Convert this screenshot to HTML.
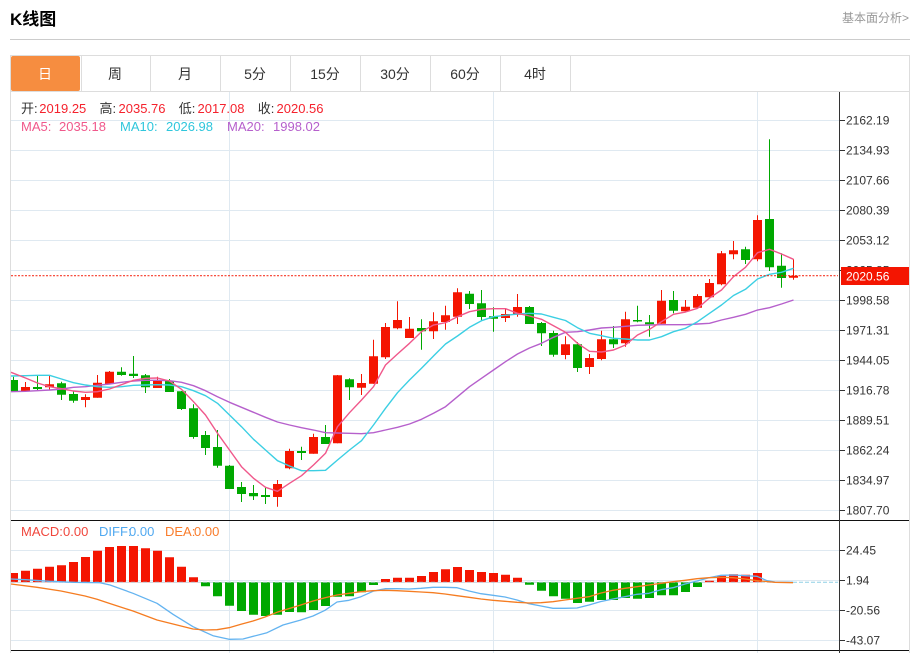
<!DOCTYPE html>
<html><head><meta charset="utf-8"><style>
html,body{margin:0;padding:0;background:#fff;width:918px;height:653px;overflow:hidden}
svg{display:block}
text{font-family:"Liberation Sans","Noto Sans CJK SC",sans-serif}
</style></head><body>
<svg width="918" height="653" viewBox="0 0 918 653" xmlns="http://www.w3.org/2000/svg">
<text x="10" y="25" font-size="17" font-weight="700" fill="#000">K线图</text>
<text x="842" y="22" font-size="12" fill="#999">基本面分析&gt;</text>
<path d="M10 39.5H910" stroke="#ccc" fill="none"/>
<!-- frame and tabs -->
<path d="M10 55.5H909.5V653M10.5 55V653M10 91.5H909.5" stroke="#ddd" fill="none"/>
<path d="M81.5 56V91M150.5 56V91M220.5 56V91M290.5 56V91M360.5 56V91M430.5 56V91M500.5 56V91M570.5 56V91" stroke="#ddd" fill="none"/>
<rect x="11" y="56" width="69" height="35" rx="2" fill="#f68d40"/>
<g font-size="14" text-anchor="middle" fill="#333">
<text x="45" y="79" fill="#fff">日</text>
<text x="115" y="79">周</text>
<text x="185" y="79">月</text>
<text x="255" y="79">5分</text>
<text x="325" y="79">15分</text>
<text x="395" y="79">30分</text>
<text x="465" y="79">60分</text>
<text x="535" y="79">4时</text>
</g>
<!-- grid -->
<path d="M11 120.5H839M11 150.5H839M11 180.5H839M11 210.5H839M11 240.5H839M11 270.5H839M11 300.5H839M11 330.5H839M11 360.5H839M11 390.5H839M11 420.5H839M11 450.5H839M11 480.5H839M11 510.5H839M11 550.5H839M11 580.5H839M11 610.5H839M11 640.5H839M229.5 92V653M493.5 92V653M757.5 92V653" stroke="#dfe9f1" fill="none"/>
<!-- candles red -->
<path stroke="#f41501" fill="none" d="M25.5 382V391M49.5 376V390M85.5 394.3V407.3M97.5 375V397.7M109.5 371V384M157.5 376.7V388M277.5 480V506.7M289.5 448.7V469.3M313.5 433.7V453.7M337.5 375V443.3M361.5 374V395M373.5 339.7V383.7M385.5 323V359M397.5 301.3V329.3M409.5 317V338M433.5 312.3V339M445.5 305.7V329.7M457.5 288.3V324M505.5 308.3V322M517.5 294V316.7M565.5 336.3V359.3M589.5 354V374M601.5 330.7V360.3M625.5 311.7V346.7M661.5 290V323.7M685.5 300V311.3M697.5 294.3V307.7M709.5 279V297.3M721.5 251V285.3M733.5 241V259.3M757.5 215.3V261.3M793.5 259.3V279.7"/>
<path fill="#f41501" d="M21 387h9v4h-9zM45 384.3h9v3h-9zM81 397h9v3h-9zM93 382.7h9v15h-9zM105 371.7h9v12.3h-9zM153 381h9v7h-9zM273 484h9v13h-9zM285 451h9v17.3h-9zM309 437h9v16.7h-9zM333 375.3h9v68h-9zM357 383h9v4.7h-9zM369 356.3h9v27.4h-9zM381 327h9v30.3h-9zM393 320h9v8.3h-9zM405 328.7h9v9.3h-9zM429 321.3h9v10h-9zM441 315.3h9v6.7h-9zM453 292.3h9v24.4h-9zM501 314h9v4h-9zM513 307h9v7.7h-9zM561 344.3h9v10.7h-9zM585 358h9v9h-9zM597 339.3h9v19.7h-9zM621 319.3h9v24h-9zM657 300.7h9v23h-9zM681 306.7h9v4.6h-9zM693 296h9v11.7h-9zM705 283h9v14.3h-9zM717 253.3h9v31h-9zM729 250.3h9v4h-9zM753 220h9v39.3h-9zM789 275.7h9v2h-9z"/>
<!-- candles green -->
<path stroke="#00a800" fill="none" d="M13.5 376.7V391.3M37.5 376V390M61.5 381.7V400M73.5 390.7V402.7M121.5 367.3V375.7M133.5 356V378M145.5 374V393M169.5 379V392M181.5 391V410M193.5 404.3V438.7M205.5 431V455M217.5 430V467.7M229.5 465V489M241.5 482V502M253.5 485V500M265.5 486.7V504M301.5 446.7V460M325.5 425V444M349.5 378.3V400M421.5 319.3V349.7M469.5 291V309M481.5 290V321M493.5 307.3V331.7M529.5 306V324M541.5 322V346M553.5 330.7V356.7M577.5 342V372M613.5 326V348M637.5 305.7V322.3M649.5 315V336.7M673.5 291V313.3M745.5 246.7V264M769.5 139.3V271M781.5 253.3V287.7"/>
<path fill="#00a800" d="M11 380h7v11.3h-7zM33 387h9v2h-9zM57 383.3h9v11.4h-9zM69 394h9v6.7h-9zM117 371.7h9v3.3h-9zM129 373.7h9v2.3h-9zM141 375.3h9v12h-9zM165 381h9v11h-9zM177 391.3h9v17.7h-9zM189 408.3h9v28.7h-9zM201 435h9v13h-9zM213 447h9v18.7h-9zM225 465.7h9v23.3h-9zM237 487h9v7h-9zM249 493h9v3.3h-9zM261 495h9v2h-9zM297 451h9v2h-9zM321 437h9v7h-9zM345 379.3h9v8h-9zM417 328h9v3.3h-9zM465 293.7h9v10.3h-9zM477 303.3h9v13.7h-9zM489 316.3h9v2.4h-9zM525 307h9v17h-9zM537 323h9v10.3h-9zM549 333h9v21.7h-9zM573 344.3h9v23.7h-9zM609 339.3h9v5h-9zM633 320h9v1.5h-9zM645 322.3h9v2h-9zM669 300h9v10.7h-9zM741 249.3h9v10.7h-9zM765 219h9v48.3h-9zM777 265.7h9v12.3h-9z"/>
<!-- MA lines -->
<g fill="none" stroke-width="1.4" stroke-linejoin="round">
<polyline stroke="#b660cc" points="11,391.7 25.5,391.3 37.5,390.7 49.5,390 61.5,389 73.5,387.3 85.5,386.7 97.5,385.3 109.5,384 121.5,382.3 133.5,381 145.5,380.3 157.5,380.3 169.5,380.7 181.5,382.3 193.5,385.7 205.5,390.7 217.5,396.7 229.5,402.3 241.5,407.3 253.5,412.3 265.5,417.3 277.5,422 289.5,425 301.5,427.7 313.5,430 325.5,432.7 337.5,433 349.5,433.3 361.5,433.7 373.5,432.7 385.5,430 397.5,427.3 409.5,424 421.5,419.3 433.5,413.3 445.5,406.7 457.5,396.7 469.5,386.7 481.5,378.3 493.5,370 505.5,361.7 517.5,354 529.5,348 541.5,343.3 553.5,337.3 565.5,332.3 577.5,331.7 589.5,330 601.5,328 613.5,327.3 625.5,326.3 637.5,325.3 649.5,325 661.5,324.7 673.5,324.7 685.5,324.7 697.5,324 709.5,323.3 721.5,320 733.5,317.3 745.5,314.3 757.5,310 769.5,307.7 781.5,304 793.5,300"/>
<polyline stroke="#3ccfe3" points="11,376 25.5,375.7 37.5,375.3 49.5,375.3 61.5,379 73.5,382.7 85.5,385 97.5,386.7 109.5,387.3 121.5,386.7 133.5,385.3 145.5,385 157.5,384.7 169.5,385 181.5,386.7 193.5,390.7 205.5,395.7 217.5,403.3 229.5,415 241.5,426.7 253.5,439.3 265.5,450 277.5,460.7 289.5,466 301.5,470.7 313.5,470.7 325.5,470.3 337.5,460 349.5,450 361.5,440.7 373.5,425 385.5,408.3 397.5,392.7 409.5,380 421.5,368.3 433.5,356 445.5,344 457.5,336 469.5,327.3 481.5,320.7 493.5,316.7 505.5,315.3 517.5,314 529.5,313.3 541.5,314 553.5,317.3 565.5,320.5 577.5,327.7 589.5,333.3 601.5,335.7 613.5,338.3 625.5,339 637.5,340 649.5,340 661.5,336.7 673.5,331.7 685.5,328.3 697.5,321.7 709.5,313.3 721.5,305 733.5,295.5 745.5,289.3 757.5,279 769.5,274.3 781.5,272.3 793.5,268.3"/>
<polyline stroke="#f0588b" points="11,372.3 25.5,378 37.5,383 49.5,386.7 61.5,388.7 73.5,391 85.5,392.3 97.5,391.7 109.5,389 121.5,384.7 133.5,380.3 145.5,378.3 157.5,378 169.5,381 181.5,389.3 193.5,401.7 205.5,415 217.5,433.3 229.5,450 241.5,466.7 253.5,478.3 265.5,487.3 277.5,491.3 289.5,483.3 301.5,475.7 313.5,465 325.5,453.3 337.5,426.7 349.5,412.7 361.5,400 373.5,386.7 385.5,365 397.5,354 409.5,343.3 421.5,331.7 433.5,325 445.5,322.7 457.5,316.7 469.5,311.7 481.5,309.3 493.5,308.7 505.5,308.7 517.5,313.3 529.5,316 541.5,319.3 553.5,325.7 565.5,332.3 577.5,343.3 589.5,351.3 601.5,352 613.5,350 625.5,345 637.5,335 649.5,329.3 661.5,321.7 673.5,314.3 685.5,312 697.5,308.3 709.5,298 721.5,290 733.5,276.7 745.5,267.3 757.5,252.7 769.5,249.3 781.5,254 793.5,259.3"/>
</g>
<!-- price line -->
<path d="M11 275.7H838" stroke="#f41501" stroke-width="1.2" stroke-dasharray="2 1.5" fill="none" opacity=".85"/>
<!-- MACD bars -->
<path fill="#f41501" d="M11 573h7v9.3h-7zM21 570.7h9v11.6h-9zM33 568.7h9v13.6h-9zM45 566.7h9v15.6h-9zM57 565.3h9v17h-9zM69 562h9v20.3h-9zM81 557h9v25.3h-9zM93 550.7h9v31.6h-9zM105 547h9v35.3h-9zM117 546h9v36.3h-9zM129 546h9v36.3h-9zM141 548.3h9v34h-9zM153 550.7h9v31.6h-9zM165 557.3h9v25h-9zM177 566.7h9v15.6h-9zM189 577.3h9v5h-9zM381 579h9v3.3h-9zM393 577.7h9v4.6h-9zM405 577.7h9v4.6h-9zM417 576h9v6.3h-9zM429 572h9v10.3h-9zM441 569.3h9v13h-9zM453 567h9v15.3h-9zM465 570h9v12.3h-9zM477 572h9v10.3h-9zM489 573h9v9.3h-9zM501 574.7h9v7.6h-9zM513 577.7h9v4.6h-9zM705 580.7h9v1.6h-9zM717 575.7h9v6.6h-9zM729 574.3h9v8h-9zM741 574.7h9v7.6h-9zM753 573h9v9.3h-9z"/>
<path fill="#00a800" d="M201 582.3h9v4h-9zM213 582.3h9v14h-9zM225 582.3h9v23.4h-9zM237 582.3h9v28.7h-9zM249 582.3h9v32.4h-9zM261 582.3h9v33.7h-9zM273 582.3h9v32.4h-9zM285 582.3h9v29.7h-9zM297 582.3h9v30h-9zM309 582.3h9v27.7h-9zM321 582.3h9v23.7h-9zM333 582.3h9v14.4h-9zM345 582.3h9v14h-9zM357 582.3h9v10h-9zM369 582.3h9v2.7h-9zM525 582.3h9v2.4h-9zM537 582.3h9v8.4h-9zM549 582.3h9v14h-9zM561 582.3h9v16.4h-9zM573 582.3h9v20.7h-9zM585 582.3h9v19.4h-9zM597 582.3h9v17.7h-9zM609 582.3h9v17.7h-9zM621 582.3h9v15.7h-9zM633 582.3h9v16.4h-9zM645 582.3h9v15.7h-9zM657 582.3h9v13h-9zM669 582.3h9v13h-9zM681 582.3h9v9.7h-9zM693 582.3h9v4.7h-9z"/>
<path d="M11 582.3H793" stroke="#a9c4d4" stroke-dasharray="4 2" fill="none" opacity=".8"/>
<path d="M793 582.3H838" stroke="#8fd0e6" stroke-dasharray="4 2" fill="none"/>
<g fill="none" stroke-width="1.3" stroke-linejoin="round">
<polyline stroke="#63b3f0" points="11,579 25.5,579.7 49.5,581.3 73.5,582.3 100,582.7 110,585 133,593.3 157,603.3 173,614.3 193,626.7 213,635.7 229,639.3 243,639 267,632.7 283,625 300,620.3 313,616 325,610.3 337,602 349,600.3 361,596.7 373,591.3 385,588.7 397,588.7 409,589 421,588.3 433,587.3 445,587.3 457,587.7 469,591 481,593.7 493,595.3 505,597 517,600 529,603.7 541,606 553,608.3 565,608.3 577,608 589,605 600,601.7 613,599 625,596.7 637,594.3 649,593.3 661,589.7 673,587.7 685,584 697,581 709,577.7 721,575.3 733,575 745,575.7 757,576.3 767,580.7 775,582 793,582.3"/>
<polyline stroke="#f57c21" points="11,584 37,587.3 61,591 85,596 97,599.3 109,603.3 133,611 157,620 181,626 193,629 205,630 217,629.7 229,627.7 241,624.3 253,621 265,617 277,612.3 300,605.3 313,601 325,597.7 337,595 349,593.3 361,591.7 373,590.7 385,590.3 397,590.7 409,591.3 421,592 433,592.7 445,594 457,595.7 469,597.3 481,599 493,600.3 505,601.3 517,602.3 529,603 541,602.7 553,601.7 565,600 577,598.3 589,596.7 600,593.3 613,590.3 625,588.3 637,586.7 649,585 661,583.3 673,581.7 685,580.3 697,578.7 709,577.7 721,577.3 733,577.7 745,579 757,580.7 775,582.3 793,582.7"/>
</g>
<!-- axes -->
<path d="M11 520.5H909M11 650.5H909" stroke="#111" fill="none"/>
<path d="M839.5 92V653" stroke="#333" fill="none"/>
<path d="M840 120.5h5M840 150.5h5M840 180.5h5M840 210.5h5M840 240.5h5M840 270.5h5M840 300.5h5M840 330.5h5M840 360.5h5M840 390.5h5M840 420.5h5M840 450.5h5M840 480.5h5M840 510.5h5M840 550.5h5M840 580.5h5M840 610.5h5M840 640.5h5" stroke="#333" fill="none"/>
<g font-size="12" fill="#333">
<text x="846" y="124.5">2162.19</text>
<text x="846" y="154.5">2134.93</text>
<text x="846" y="184.5">2107.66</text>
<text x="846" y="214.5">2080.39</text>
<text x="846" y="244.5">2053.12</text>
<text x="846" y="274.5">2025.85</text>
<text x="846" y="304.5">1998.58</text>
<text x="846" y="334.5">1971.31</text>
<text x="846" y="364.5">1944.05</text>
<text x="846" y="394.5">1916.78</text>
<text x="846" y="424.5">1889.51</text>
<text x="846" y="454.5">1862.24</text>
<text x="846" y="484.5">1834.97</text>
<text x="846" y="514.5">1807.70</text>
<text x="846" y="554.5">24.45</text>
<text x="846" y="584.5">1.94</text>
<text x="846" y="614.5">-20.56</text>
<text x="846" y="644.5">-43.07</text>
</g>
<rect x="841" y="267" width="68" height="18" fill="#f41501"/>
<text x="846" y="280.5" font-size="12" fill="#fff">2020.56</text>
<!-- legends -->
<g font-size="13">
<g fill="#333">
<text x="21" y="113">开:</text>
<text x="99.5" y="113">高:</text>
<text x="178.7" y="113">低:</text>
<text x="257.7" y="113">收:</text>
</g>
<g fill="#f5222d">
<text x="39.3" y="113">2019.25</text>
<text x="118.5" y="113">2035.76</text>
<text x="197.5" y="113">2017.08</text>
<text x="276.5" y="113">2020.56</text>
</g>
<g fill="#f0588b">
<text x="21" y="131">MA5:</text>
<text x="59" y="131">2035.18</text>
</g>
<g fill="#2fc6dc">
<text x="120" y="131">MA10:</text>
<text x="166" y="131">2026.98</text>
</g>
<g fill="#b660cc">
<text x="227" y="131">MA20:</text>
<text x="273" y="131">1998.02</text>
</g>
<g fill="#f0463c">
<text x="21" y="536">MACD:</text>
<text x="63" y="536">0.00</text>
</g>
<g fill="#4fa8f0">
<text x="99" y="536">DIFF:</text>
<text x="129" y="536">0.00</text>
</g>
<g fill="#f97c2b">
<text x="165" y="536">DEA:</text>
<text x="194" y="536">0.00</text>
</g>
</g>
</svg>
</body></html>
